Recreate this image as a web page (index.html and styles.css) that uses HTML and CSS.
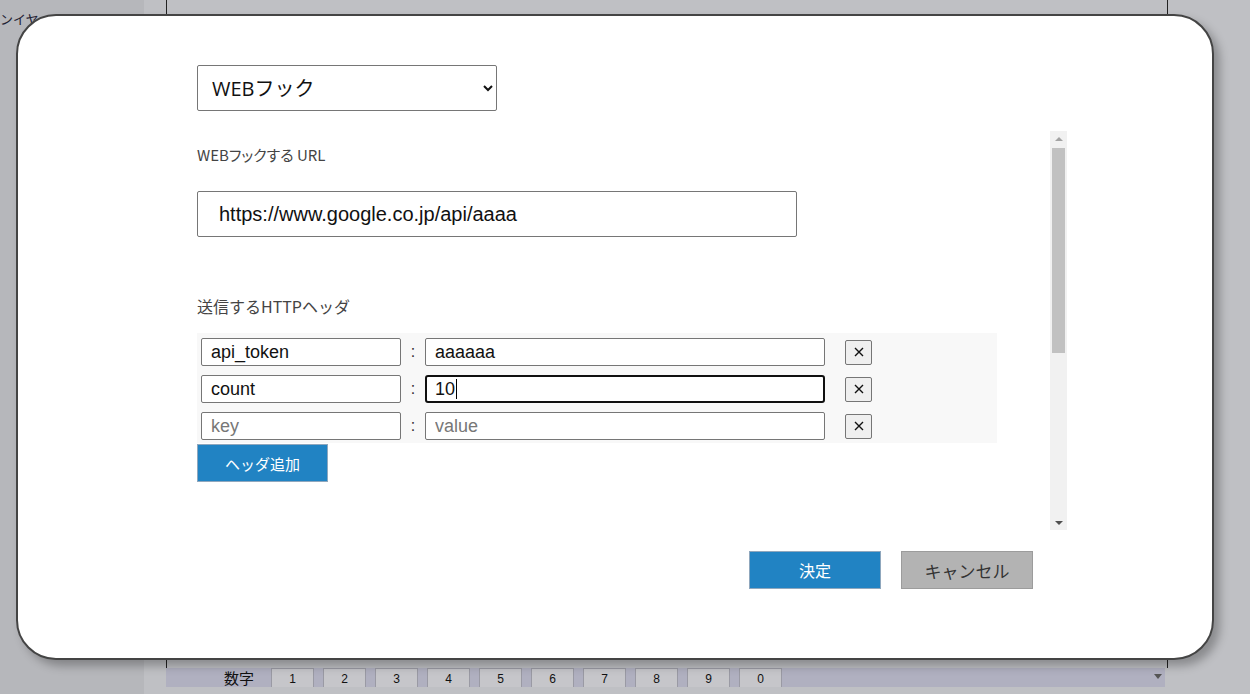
FILE: index.html
```html
<!DOCTYPE html>
<html lang="ja">
<head>
<meta charset="utf-8">
<title>WEBフック</title>
<link rel="stylesheet" href="styles.css">
</head>
<body>
<div class="stage">
  <aside class="side"><span class="side-text">ンイヤ</span></aside>
  <main class="main">
    <div class="canvas"></div>
    <div class="keybar">
      <span class="keybar-label">数字</span>
      <span class="key">1</span><span class="key">2</span><span class="key">3</span><span class="key">4</span><span class="key">5</span><span class="key">6</span><span class="key">7</span><span class="key">8</span><span class="key">9</span><span class="key">0</span>
      <span class="keybar-arrow"></span>
    </div>
  </main>
</div>

<div class="modal">
  <select class="type-select">
    <option>WEBフック</option>
  </select>
  <div class="scroll-wrap">
    <div class="scroll-content">
      <div class="label label-url">WEBフックする URL</div>
      <input class="url-input" type="text" value="https://www.google.co.jp/api/aaaa">
      <div class="label label-headers">送信するHTTPヘッダ</div>
      <div class="headers">
        <div class="hrow">
          <input class="hkey" type="text" value="api_token">
          <span class="colon">:</span>
          <input class="hval" type="text" value="aaaaaa">
          <button class="hdel"><svg width="10" height="10" viewBox="0 0 10 10"><path d="M1 1L9 9M9 1L1 9" stroke="#111" stroke-width="1.4" fill="none"/></svg></button>
        </div>
        <div class="hrow">
          <input class="hkey" type="text" value="count">
          <span class="colon">:</span>
          <div class="hval focused">10<span class="caret"></span></div>
          <button class="hdel"><svg width="10" height="10" viewBox="0 0 10 10"><path d="M1 1L9 9M9 1L1 9" stroke="#111" stroke-width="1.4" fill="none"/></svg></button>
        </div>
        <div class="hrow">
          <input class="hkey" type="text" placeholder="key">
          <span class="colon">:</span>
          <input class="hval" type="text" placeholder="value">
          <button class="hdel"><svg width="10" height="10" viewBox="0 0 10 10"><path d="M1 1L9 9M9 1L1 9" stroke="#111" stroke-width="1.4" fill="none"/></svg></button>
        </div>
      </div>
      <button class="btn btn-blue add-btn">ヘッダ追加</button>
    </div>
    <div class="scrollbar">
      <span class="sb-up"></span>
      <span class="sb-thumb"></span>
      <span class="sb-track"></span>
      <span class="sb-down"></span>
    </div>
  </div>
  <div class="footer">
    <button class="btn btn-blue">決定</button>
    <button class="btn btn-gray">キャンセル</button>
  </div>
</div>
</body>
</html>
```

FILE: styles.css
```css
html, body {
  margin: 0;
  padding: 0;
}
body {
  width: 1250px;
  height: 694px;
  overflow: hidden;
  background: #bfc0c4;
  font-family: "Liberation Sans", "Noto Sans CJK JP", sans-serif;
  position: relative;
}
.stage {
  display: flex;
  height: 694px;
}
.side {
  width: 144px;
  background: #b6b7bb;
  flex: none;
}
.side-text {
  display: block;
  margin-top: 11px;
  font-size: 13px;
  color: #223;
  line-height: 16px;
  font-family: "Noto Sans CJK JP", sans-serif;
}
.main {
  flex: none;
  margin-left: 22px;
  width: 1002px;
  display: flex;
  flex-direction: column;
}
.canvas {
  height: 668px;
  border-left: 1px solid #222;
  border-right: 1px solid #222;
  box-sizing: border-box;
}
.keybar {
  height: 19px;
  width: 999px;
  background: #b0b0c0;
  display: flex;
  align-items: flex-start;
  overflow: hidden;
  position: relative;
}
.keybar-label {
  width: 105px;
  text-align: right;
  padding-right: 17px;
  box-sizing: border-box;
  font-size: 15px;
  line-height: 19px;
  color: #111;
  font-family: "Noto Sans CJK JP", sans-serif;
}
.key {
  width: 43px;
  height: 19px;
  margin-right: 9px;
  background: #c6c6ca;
  border: 1px solid #9a9aa4;
  border-bottom: none;
  box-sizing: border-box;
  text-align: center;
  font-size: 12px;
  line-height: 14px;
  padding-top: 3px;
  color: #111;
}
.keybar-arrow {
  position: absolute;
  right: 3px;
  top: 6px;
  width: 0;
  height: 0;
  border-left: 4px solid transparent;
  border-right: 4px solid transparent;
  border-top: 5px solid #555;
}

.modal {
  position: absolute;
  left: 16px;
  top: 14px;
  width: 1198px;
  height: 646px;
  box-sizing: border-box;
  background: #fff;
  border: 2px solid #444;
  border-radius: 40px;
  box-shadow: 6px 6px 10px rgba(0, 0, 0, 0.28);
  padding: 49px 0 0 179px;
}
.type-select {
  display: block;
  width: 300px;
  height: 46px;
  font-family: "Open Sans", "Noto Sans CJK JP", sans-serif;
  font-size: 20px;
  color: #111;
  padding: 0 8px 0 10px;
  border: 1px solid #767676;
  border-radius: 2px;
  background: #fff;
  box-sizing: border-box;
}
.scroll-wrap {
  display: flex;
  margin-top: 20px;
  height: 399px;
}
.scroll-content {
  width: 853px;
  padding-top: 14px;
  box-sizing: border-box;
}
.label {
  font-size: 15px;
  line-height: 20px;
  color: #444;
  font-family: "Noto Sans CJK JP", sans-serif;
  font-weight: 400;
}
.label-url {
  font-feature-settings: "palt";
}
.url-input {
  display: block;
  margin-top: 26px;
  width: 600px;
  height: 46px;
  box-sizing: border-box;
  border: 1px solid #767676;
  border-radius: 2px;
  padding: 0 0 0 21px;
  font-family: "Liberation Sans", sans-serif;
  font-size: 20px;
  color: #111;
  outline: none;
}
.label-headers {
  margin-top: 59px;
  font-size: 16px;
}
.headers {
  margin-top: 17px;
  width: 800px;
  height: 110px;
  box-sizing: border-box;
  background: #f8f8f8;
  padding: 5px 4px 0;
  display: flex;
  flex-direction: column;
  gap: 9px;
}
.hrow {
  display: flex;
  align-items: center;
  height: 28px;
}
.hkey, .hval {
  height: 28px;
  box-sizing: border-box;
  border: 1px solid #767676;
  border-radius: 2px;
  padding: 0 0 0 9px;
  font-family: "Liberation Sans", sans-serif;
  font-size: 18px;
  color: #111;
  background: #fff;
  outline: none;
}
.hkey {
  width: 200px;
}
.hval {
  width: 400px;
}
.hkey::placeholder, .hval::placeholder {
  color: #777;
}
.focused {
  border: 2px solid #101010;
  border-radius: 3px;
  padding-left: 8px;
  line-height: 24px;
  display: flex;
  align-items: center;
}
.caret {
  display: inline-block;
  width: 1px;
  height: 20px;
  background: #000;
  margin-left: 1px;
}
.colon {
  width: 24px;
  text-align: center;
  font-size: 16px;
  color: #333;
}
.hdel {
  margin-left: 20px;
  width: 27px;
  height: 25px;
  padding: 0;
  border: 1px solid #767676;
  border-radius: 2px;
  background: #efefef;
  display: flex;
  align-items: center;
  justify-content: center;
}
.btn {
  height: 38px;
  width: 132px;
  box-sizing: border-box;
  font-family: "Noto Sans CJK JP", sans-serif;
  font-size: 16px;
  padding: 0;
  cursor: pointer;
}
.btn-blue {
  background: #2183c3;
  color: #fff;
  border: 1px solid #8fa7bd;
}
.btn-gray {
  background: #b3b3b3;
  color: #333;
  border: 1px solid #9c9c9c;
  font-size: 17px;
}
.add-btn {
  display: block;
  margin-top: 1px;
  width: 131px;
  font-size: 15px;
}
.scrollbar {
  width: 17px;
  height: 399px;
  background: #f1f1f1;
  display: flex;
  flex-direction: column;
  align-items: center;
}
.sb-up, .sb-down {
  width: 0;
  height: 0;
  border-left: 4px solid transparent;
  border-right: 4px solid transparent;
  margin: 6px 0 5px;
}
.sb-up {
  border-bottom: 4px solid #a3a3a3;
}
.sb-down {
  border-top: 4px solid #505050;
}
.sb-thumb {
  width: 13px;
  height: 205px;
  background: #c1c1c1;
  margin-top: 2px;
}
.sb-track {
  flex: 1;
}
.footer {
  display: flex;
  justify-content: flex-end;
  gap: 20px;
  width: 836px;
  margin-top: 21px;
}
```
